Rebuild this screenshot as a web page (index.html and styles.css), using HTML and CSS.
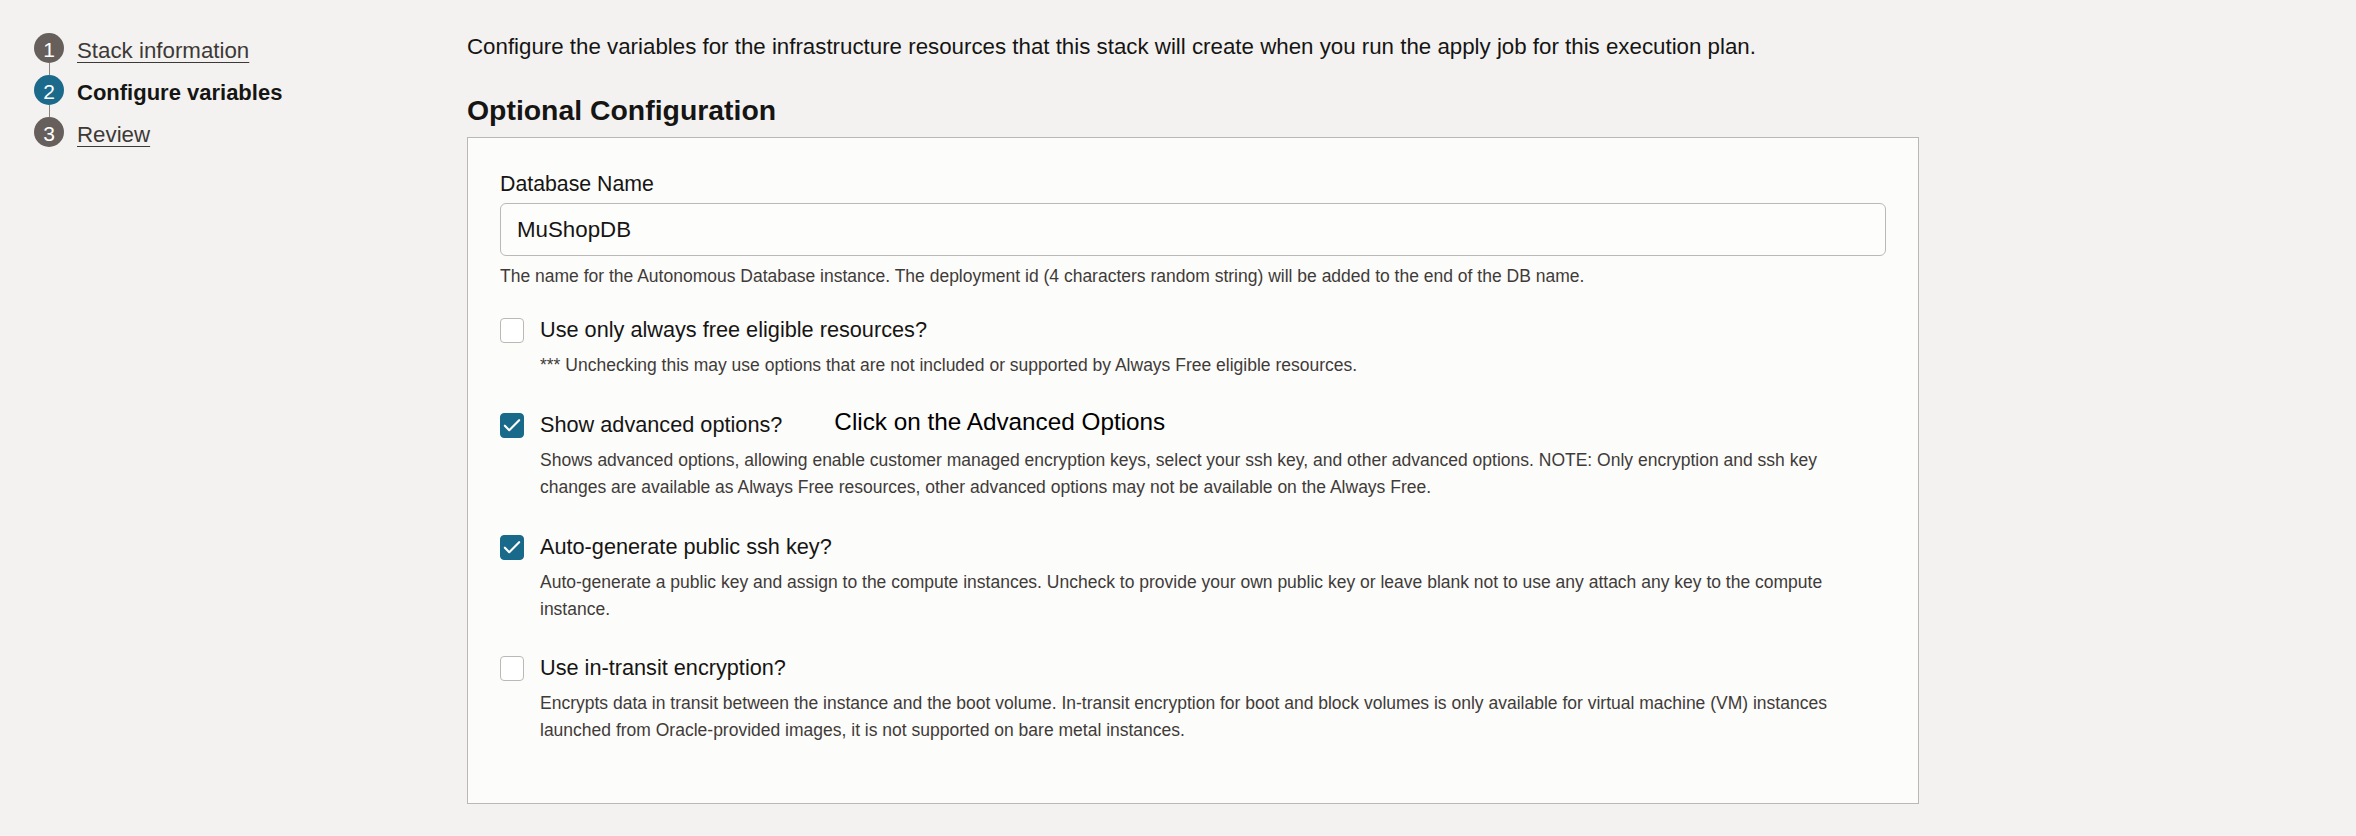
FILE: index.html
```html
<!DOCTYPE html>
<html lang="en">
<head>
<meta charset="utf-8">
<title>Configure variables</title>
<link rel="stylesheet" href="styles.css">
</head>
<body>
<div class="page">
  <nav class="steps">
    <div class="step">
      <span class="step-num">1</span>
      <a class="step-link" href="#">Stack information</a>
    </div>
    <div class="step-line"></div>
    <div class="step">
      <span class="step-num step-num-active">2</span>
      <span class="step-current">Configure variables</span>
    </div>
    <div class="step-line"></div>
    <div class="step">
      <span class="step-num">3</span>
      <a class="step-link" href="#">Review</a>
    </div>
  </nav>

  <main class="main">
    <p class="intro">Configure the variables for the infrastructure resources that this stack will create when you run the apply job for this execution plan.</p>
    <h2 class="section-title">Optional Configuration</h2>

    <section class="panel">
      <div class="field">
        <label class="field-label">Database Name</label>
        <div class="text-input">MuShopDB</div>
        <p class="help">The name for the Autonomous Database instance. The deployment id (4 characters random string) will be added to the end of the DB name.</p>
      </div>

      <div class="option option-first">
        <div class="option-row">
          <span class="checkbox"></span>
          <span class="option-label">Use only always free eligible resources?</span>
        </div>
        <p class="option-desc">*** Unchecking this may use options that are not included or supported by Always Free eligible resources.</p>
      </div>

      <div class="option">
        <div class="option-row">
          <span class="checkbox checkbox-on"><svg viewBox="0 0 24 24" width="24" height="24"><path d="M4.2 12.8 L9 17.6 L19.8 6.8" fill="none" stroke="#fff" stroke-width="2.3" stroke-linecap="round" stroke-linejoin="round"/></svg></span>
          <span class="option-label">Show advanced options?</span>
          <span class="annotation">Click on the Advanced Options</span>
        </div>
        <p class="option-desc">Shows advanced options, allowing enable customer managed encryption keys, select your ssh key, and other advanced options. NOTE: Only encryption and ssh key changes are available as Always Free resources, other advanced options may not be available on the Always Free.</p>
      </div>

      <div class="option">
        <div class="option-row">
          <span class="checkbox checkbox-on"><svg viewBox="0 0 24 24" width="24" height="24"><path d="M4.2 12.8 L9 17.6 L19.8 6.8" fill="none" stroke="#fff" stroke-width="2.3" stroke-linecap="round" stroke-linejoin="round"/></svg></span>
          <span class="option-label">Auto-generate public ssh key?</span>
        </div>
        <p class="option-desc">Auto-generate a public key and assign to the compute instances. Uncheck to provide your own public key or leave blank not to use any attach any key to the compute instance.</p>
      </div>

      <div class="option option-last">
        <div class="option-row">
          <span class="checkbox"></span>
          <span class="option-label">Use in-transit encryption?</span>
        </div>
        <p class="option-desc">Encrypts data in transit between the instance and the boot volume. In-transit encryption for boot and block volumes is only available for virtual machine (VM) instances launched from Oracle-provided images, it is not supported on bare metal instances.</p>
      </div>
    </section>
  </main>
</div>
</body>
</html>
```

FILE: styles.css
```css
* { box-sizing: border-box; }

html, body {
  margin: 0;
  padding: 0;
  background: #f3f2f1;
  font-family: "Liberation Sans", Arial, Helvetica, sans-serif;
  color: #161513;
}

.page {
  display: flex;
  align-items: flex-start;
  height: 836px;
  overflow: hidden;
}

/* Stepper */
.steps {
  width: 467px;
  flex: none;
  padding: 33px 0 0 34px;
  display: flex;
  flex-direction: column;
}

.step {
  display: flex;
  align-items: center;
  height: 30px;
  gap: 13px;
}

.step-num {
  width: 30px;
  height: 30px;
  border-radius: 50%;
  background: #665f5b;
  color: #ffffff;
  font-size: 21px;
  line-height: 34px;
  text-align: center;
  flex: none;
}

.step-num-active {
  background: #1b6a8c;
}

.step-line {
  width: 1px;
  height: 12px;
  margin-left: 14.5px;
  background: #8b8581;
}

.step-link {
  padding-top: 6px;
  font-size: 22.3px;
  color: #3d3936;
  text-decoration: underline;
  text-decoration-thickness: 1px;
  text-underline-offset: 4px;
}

.step-current {
  padding-top: 6px;
  font-size: 22px;
  font-weight: bold;
  color: #161513;
}

/* Main column */
.main {
  width: 1452px;
  flex: none;
  padding-top: 33px;
}

.intro {
  margin: 0;
  font-size: 22.3px;
  line-height: 28px;
  color: #161513;
}

.section-title {
  margin: 32px 0 10px;
  font-size: 28.4px;
  line-height: 34px;
  font-weight: bold;
  color: #161513;
}

.panel {
  background: #fcfcfb;
  border: 1px solid #bab7b4;
  padding: 33px 32px 59px;
}

.field-label {
  display: block;
  font-size: 21.3px;
  line-height: 26px;
  color: #161513;
  margin-bottom: 6px;
}

.text-input {
  height: 53px;
  border: 1px solid #bcb8b5;
  border-radius: 6px;
  background: #fdfdfc;
  padding: 0 16px;
  font-size: 22.3px;
  line-height: 51px;
  color: #161513;
}

.help {
  margin: 7px 0 0;
  font-size: 17.5px;
  line-height: 27px;
  color: #3f3b38;
}

.option {
  margin-top: 33px;
}

.option-first {
  margin-top: 27px;
}

.option-last {
  margin-top: 32px;
}

.option-row {
  display: flex;
  align-items: center;
  height: 26px;
}

.checkbox {
  width: 24px;
  height: 25px;
  border: 1px solid #bdb8b4;
  border-radius: 4px;
  background: #ffffff;
  flex: none;
  display: flex;
  align-items: center;
  justify-content: center;
}

.checkbox-on {
  background: #19698b;
  border-color: #19698b;
}

.option-label {
  margin-left: 16px;
  font-size: 21.7px;
  line-height: 26px;
  color: #161513;
}

.annotation {
  margin-left: 52px;
  margin-bottom: 6px;
  font-size: 24.3px;
  line-height: 26px;
  color: #000000;
}

.option-desc {
  margin: 9px 0 0 40px;
  font-size: 17.5px;
  line-height: 27px;
  color: #3f3b38;
}
```
